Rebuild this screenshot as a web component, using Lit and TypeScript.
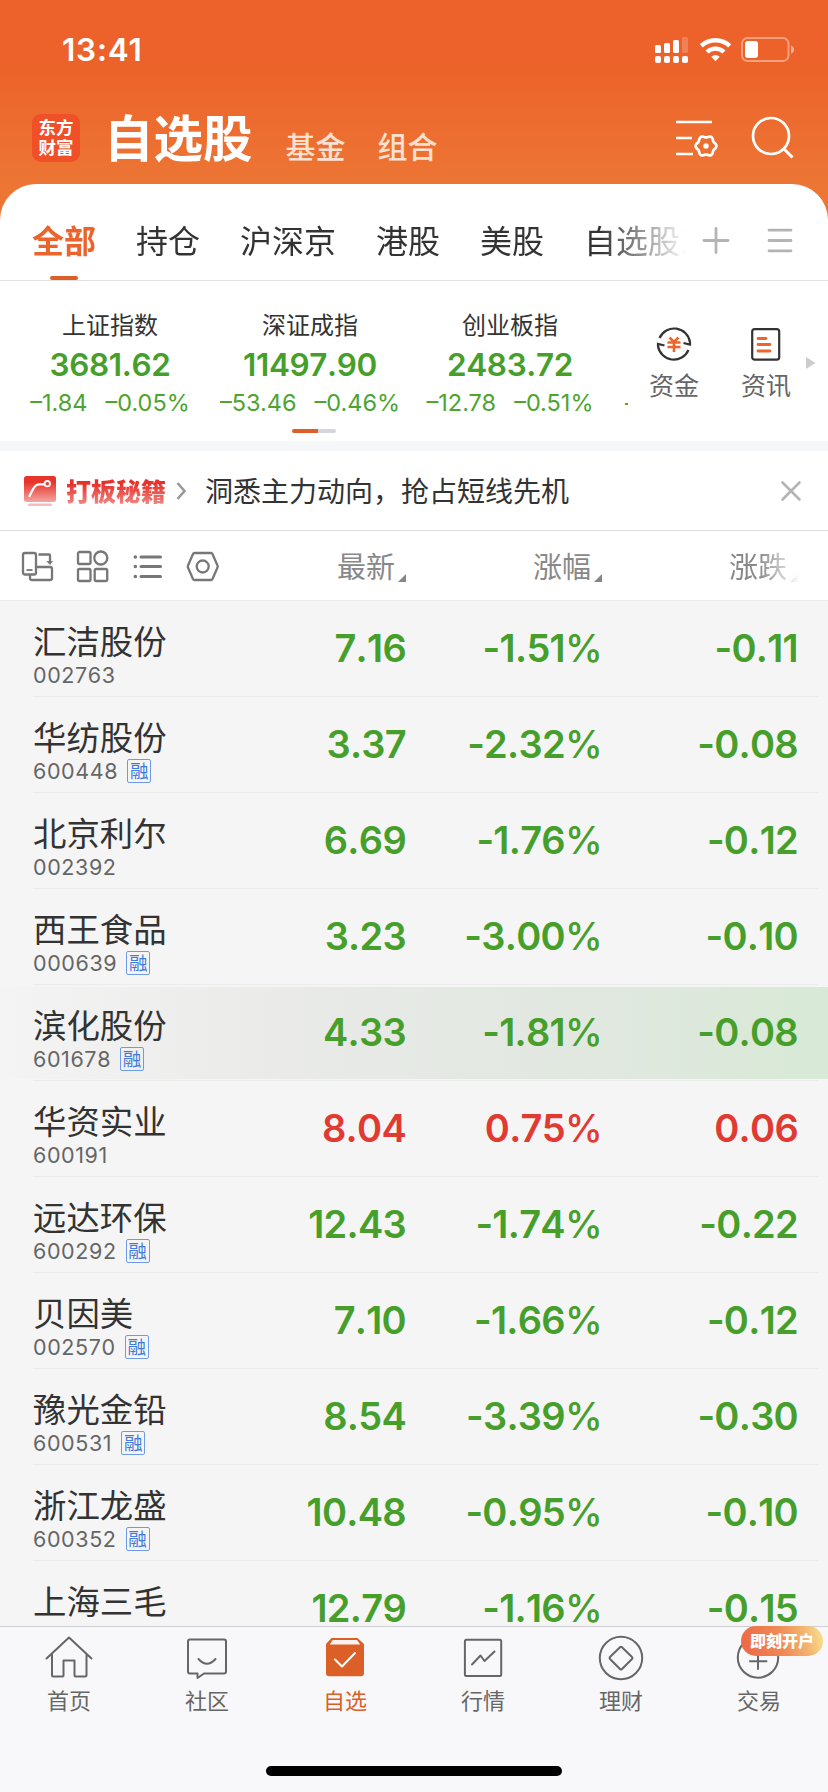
import { LitElement, html, css, svg } from "lit";
import { customElement, property } from "lit/decorators.js";
import { classMap } from "lit/directives/class-map.js";

interface Stock {
  name: string;
  code: string;
  margin: boolean;
  last: string;
  pct: string;
  diff: string;
  flash?: boolean;
}

const stocks: Stock[] = [
  { name: "汇洁股份", code: "002763", margin: false, last: "7.16", pct: "-1.51%", diff: "-0.11" },
  { name: "华纺股份", code: "600448", margin: true, last: "3.37", pct: "-2.32%", diff: "-0.08" },
  { name: "北京利尔", code: "002392", margin: false, last: "6.69", pct: "-1.76%", diff: "-0.12" },
  { name: "西王食品", code: "000639", margin: true, last: "3.23", pct: "-3.00%", diff: "-0.10" },
  { name: "滨化股份", code: "601678", margin: true, last: "4.33", pct: "-1.81%", diff: "-0.08", flash: true },
  { name: "华资实业", code: "600191", margin: false, last: "8.04", pct: "0.75%", diff: "0.06" },
  { name: "远达环保", code: "600292", margin: true, last: "12.43", pct: "-1.74%", diff: "-0.22" },
  { name: "贝因美", code: "002570", margin: true, last: "7.10", pct: "-1.66%", diff: "-0.12" },
  { name: "豫光金铅", code: "600531", margin: true, last: "8.54", pct: "-3.39%", diff: "-0.30" },
  { name: "浙江龙盛", code: "600352", margin: true, last: "10.48", pct: "-0.95%", diff: "-0.10" },
  { name: "上海三毛", code: "", margin: false, last: "12.79", pct: "-1.16%", diff: "-0.15" },
];

const indices = [
  { name: "上证指数", value: "3681.62", diff: "–1.84", pct: "–0.05%" },
  { name: "深证成指", value: "11497.90", diff: "–53.46", pct: "–0.46%" },
  { name: "创业板指", value: "2483.72", diff: "–12.78", pct: "–0.51%" },
];

const tabs = ["全部", "持仓", "沪深京", "港股", "美股", "自选股1"];

@customElement("stock-row")
class StockRow extends LitElement {
  @property({ attribute: false }) stock!: Stock;

  static styles = css`
    :host { display: block; height: 96px; flex: none; }
    .body {
      display: grid; grid-template-columns: 177px 196px 196px 196px;
      height: 92px; margin-top: 2px; padding-left: 33px; align-items: center;
    }
    .body.flash {
      background: linear-gradient(90deg, #f4f4f4 0, #ebebea 30%, #e6e9e5 48%, #e0e8df 75%, #d9e9d7 96%);
    }
    .id { align-self: start; padding-top: 15px; }
    .name {
      font: 400 33.4px/44px "Noto Sans CJK SC", sans-serif; color: #333; white-space: nowrap;
    }
    .meta { display: flex; align-items: center; height: 24px; margin-top: 1px; gap: 9px; }
    .code { font: 400 21.5px/24px Inter, sans-serif; color: #666; letter-spacing: 0.6px; font-kerning: none; }
    .badge {
      box-sizing: border-box; width: 24px; height: 24px; border: 1px solid #6d9be6; border-radius: 2px;
      font: 400 18.5px/20px "Noto Sans CJK SC", sans-serif; color: #3e7bdb; text-align: center;
    }
    .num {
      font: 600 38px/46px Inter, sans-serif; text-align: right; color: #479f2b; letter-spacing: -0.7px;
      font-kerning: none; position: relative; top: -1px;
    }
    .up .num { color: #e03a33; }
    .pc { font-weight: 500; }
    .line { height: 1px; margin: 1px 10px 0 33px; background: #ebebeb; }
  `;

  render() {
    const s = this.stock;
    const up = !s.pct.startsWith("-");
    return html`
      <div class=${classMap({ body: true, up, flash: !!s.flash })}>
        <div class="id">
          <div class="name">${s.name}</div>
          <div class="meta">
            <span class="code">${s.code}</span>
            ${s.margin ? html`<span class="badge">融</span>` : ""}
          </div>
        </div>
        <div class="num">${s.last}</div>
        <div class="num">${s.pct.slice(0, -1)}<span class="pc">%</span></div>
        <div class="num">${s.diff}</div>
      </div>
      <div class="line"></div>
    `;
  }
}

const gearPath = (() => {
  let d = "";
  for (let i = 0; i <= 72; i++) {
    const a = (i / 72) * Math.PI * 2;
    const r = 9.5 + 0.9 * Math.cos(6 * a);
    d += `${i ? "L" : "M"}${(30 + r * Math.cos(a)).toFixed(2)} ${(29 + r * Math.sin(a)).toFixed(2)}`;
  }
  return d + "Z";
})();

const navIcons: Record<string, unknown> = {
  home: svg`<path d="M2.5 23.5 25 2.5 47.5 23.5M8 19.5V40.5Q8 41.5 9 41.5H18.5Q19.5 41.5 19.5 40.5V25.5H30.5V40.5Q30.5 41.5 31.5 41.5H41Q42.5 41.5 42.5 40.5V19.5" />`,
  chat: svg`<path d="M8 4.5H42Q44 4.5 44 6.5V36.5Q44 38.5 42 38.5H22L15.5 43V38.5H8Q6 38.5 6 36.5V6.5Q6 4.5 8 4.5ZM16.5 24Q25 33.5 33.5 24" />`,
  star: svg`<path class="fill" d="M11.5 3H37.5L44 9V38Q44 41.2 40.8 41.2H9.2Q6 41.2 6 38V9Z" /><path class="pale" d="M12.7 4.9H37L40.2 9.6H9.8Z" /><path class="check" d="M15 24.5 22 31.5 35 18" />`,
  chart: svg`<rect x="6.9" y="4.7" width="36.3" height="36.3" rx="1.5" /><path d="M14 29.5 22.5 20.5 26.5 26 36.5 16.5" />`,
  wealth: svg`<circle cx="25" cy="23" r="21.2" /><path d="M24 12.2Q25 11.2 26 12.2L36 22Q37 23 36 24L26 34Q25 35 24 34L14 24Q13 23 14 22Z" />`,
  trade: svg`<circle cx="24" cy="22.5" r="20.2" /><path d="M16 26.3H32.5M24 18V34" />`,
};

const nav = [
  { id: "home", label: "首页" },
  { id: "chat", label: "社区" },
  { id: "star", label: "自选" },
  { id: "chart", label: "行情" },
  { id: "wealth", label: "理财" },
  { id: "trade", label: "交易", tip: "即刻开户" },
];

@customElement("app-root")
class AppRoot extends LitElement {
  static styles = css`
    :host {
      display: flex; flex-direction: column; width: 828px; height: 1792px; overflow: hidden;
      background: #f5f5f5; font-family: "Noto Sans CJK SC", sans-serif; color: #333;
    }
    * { box-sizing: border-box; }
    svg { display: block; flex: none; fill: none; overflow: visible; }
    .head {
      flex: none; height: 230px; margin-bottom: -46px; color: #fff;
      background: linear-gradient(180deg, #ec622a 0, #ec632a 72px, #ec6a2e 110px, #ec7534 180px, #ec7735 230px);
    }
    .status { display: flex; align-items: center; height: 99px; padding-left: 62px; }
    .time { flex: 1; font: 600 31.5px/40px Inter, sans-serif; letter-spacing: 0.8px; }
    .signals { margin-right: 33px; }
    .brand { display: flex; align-items: center; height: 78px; padding: 0 32px; }
    .logo {
      width: 48px; height: 48px; border-radius: 9px; background: #ef5028; margin-right: 24px;
      font: 700 17.5px/20px "Noto Sans CJK SC", sans-serif; text-align: center; padding-top: 3px;
    }
    .title { font-size: 49.5px; line-height: 60px; font-weight: 700; margin-right: 33px; padding-bottom: 5px; }
    .sub { font-size: 30px; line-height: 44px; font-weight: 500; color: #fde0d0; margin-right: 32px; padding-top: 14px; }
    .grow { flex: 1; }
    .tabs {
      display: flex; flex: none; height: 97px; background: #fff; border-radius: 36px 36px 0 0;
      border-bottom: 1px solid #e0e0e0;
    }
    .scroll {
      display: flex; gap: 40px; width: 685px; padding-left: 32px; overflow: hidden;
      -webkit-mask-image: linear-gradient(90deg, #000 600px, transparent 688px);
      mask-image: linear-gradient(90deg, #000 600px, transparent 688px);
    }
    .tab {
      display: flex; flex-direction: column; align-items: center; justify-content: space-between;
      font-size: 32px; line-height: 44px; white-space: nowrap; padding-top: 33px;
    }
    .tab.on { color: #ec642b; font-weight: 700; }
    .mark { width: 28px; height: 4px; border-radius: 2px; background: #dc5f27; }
    .tools { padding: 43px 0 0 17px; }
    .index { display: flex; flex: none; height: 160px; background: #fff; }
    .strip { display: flex; width: 628px; padding-left: 10px; overflow: hidden; }
    .cell { width: 200px; flex: none; text-align: center; padding-top: 27px; white-space: nowrap; }
    .iname { font-size: 24px; line-height: 32px; }
    .ivalue { font: 600 31.5px/38px Inter, sans-serif; color: #479f2b; margin-top: 6px; letter-spacing: -0.35px; font-kerning: none; }
    .ichange {
      display: flex; justify-content: center; gap: 18px; margin: 3px -10px 0;
      font: 400 23.5px/32px Inter, sans-serif; color: #4da431;
    }
    .pager { width: 44px; height: 4px; margin: 10px 0 0 82px; border-radius: 2px; background: linear-gradient(90deg, #dc5f27 26px, #d5d6dc 26px); }
    .peek { font: 400 23.5px/32px Inter, sans-serif; color: #4da431; padding: 106px 0 0 15px; }
    .quick { width: 92px; padding-top: 43px; display: flex; flex-direction: column; align-items: center; }
    .qlabel { font-size: 25px; line-height: 34px; color: #666; margin-top: 3px; }
    .next { margin: 76px 0 0 -6px; }
    .band { flex: none; height: 10px; background: #f6f7f9; }
    .promo { display: flex; flex: none; align-items: center; height: 80px; background: #fff; border-bottom: 1px solid #e0e0e0; padding-left: 24px; }
    .ptitle {
      font-size: 25px; line-height: 36px; font-weight: 900; margin: -2px 0 0 10px;
      background: linear-gradient(180deg, #e8312a 12px, #f08a86 33px); -webkit-background-clip: text; background-clip: text; color: transparent;
    }
    .chev { margin-left: 10px; }
    .ptext { flex: 1; font-size: 28px; line-height: 40px; margin: -2px 0 0 19px; }
    .close { margin-right: 27px; }
    .cols {
      display: grid; grid-template-columns: 210px 196px 196px 196px; flex: none; height: 70px; background: #fff;
      border-bottom: 1px solid #ececec;
    }
    .views { padding: 17.5px 0 0 20px; }
    .col { display: flex; justify-content: flex-end; font-size: 29px; line-height: 40px; color: #888; padding-top: 14px; }
    .tri { margin: 29px 0 0 3px; width: 8px; height: 8px; background: #858585; clip-path: polygon(100% 0, 100% 100%, 0 100%); }
    .fade {
      -webkit-mask-image: linear-gradient(90deg, #000 80%, transparent 101%);
      mask-image: linear-gradient(90deg, #000 80%, transparent 101%);
    }
    .list { flex: 1; min-height: 0; overflow: hidden; display: flex; flex-direction: column; }
    .nav { display: flex; flex: none; height: 166px; background: #f8f8fb; border-top: 1px solid #cfcfd4; position: relative; }
    .item { width: 138px; display: flex; flex-direction: column; align-items: center; padding-top: 8px; color: #666; position: relative; }
    .item svg { stroke: #666; stroke-width: 2; stroke-linejoin: round; stroke-linecap: round; }
    .item .fill { fill: #dc5f27; stroke: none; }
    .item .pale { fill: #fdf3ee; stroke: none; }
    .item .check { stroke: #fff; stroke-width: 2; }
    .item.on { color: #dc5f27; }
    .nlabel { font-size: 22px; line-height: 30px; margin-top: 3px; }
    .tip {
      position: absolute; left: 51px; top: -1px; width: 82px; height: 30px; border-radius: 15px;
      background: linear-gradient(75deg, #ec6d48 10%, #ef8b55 50%, #f4b671 78%, #f7e593 100%); color: #fff;
      font-size: 16px; line-height: 28px; font-weight: 900; text-align: center; white-space: nowrap;
    }
    .bar { position: absolute; left: 266px; bottom: 16px; width: 296px; height: 10px; border-radius: 5px; background: #000; }
  `;

  render() {
    return html`
      <div class="head">
        <div class="status">
          <div class="time">13:41</div>
          <svg class="signals" width="140" height="26" viewBox="0 0 140 26">
            <g fill="#fff">
              <rect x="0" y="8" width="6" height="8" rx="1.5" /><rect x="9" y="6" width="6" height="10" rx="1.5" />
              <rect x="18" y="3" width="6" height="13" rx="1.5" /><rect x="27" y="0" width="6" height="16" rx="1.5" opacity="0.2" />
              <rect x="0" y="19" width="6" height="7" rx="2" /><rect x="9" y="19" width="6" height="7" rx="2" />
              <rect x="18" y="19" width="6" height="7" rx="2" /><rect x="27" y="19" width="6" height="7" rx="2" />
              <path d="M60.5 24.2 56.3 19.7Q60.5 16.2 64.7 19.7Z" />
            </g>
            <g stroke="#fff" stroke-width="4.4">
              <path d="M46.3 8.9A20.5 20.5 0 0 1 74.7 8.9" /><path d="M52 15A12.5 12.5 0 0 1 69 15" />
            </g>
            <rect x="87" y="1" width="46.5" height="23" rx="5.5" stroke="#fff" stroke-opacity="0.4" stroke-width="2" />
            <rect x="90" y="4" width="13" height="17" rx="3" fill="#fff" />
            <path d="M136 8.5Q139 9.500 139 12.5T136 16.5Z" fill="#fff" fill-opacity="0.5" />
          </svg>
        </div>
        <div class="brand">
          <div class="logo">东方<br />财富</div>
          <div class="title">自选股</div>
          <div class="sub">基金</div>
          <div class="sub">组合</div>
          <div class="grow"></div>
          <svg width="120" height="42" viewBox="0 0 120 42" stroke="#fff" stroke-width="2.7">
            <path d="M0 5H36M0 21H16M0 37H17" />
            <path d=${gearPath} />
            <circle cx="30" cy="29" r="2.7" fill="#fff" stroke="none" />
            <circle cx="95" cy="19" r="18" /><path d="M107.5 31.5 116.5 40.5" stroke-width="3" />
          </svg>
        </div>
      </div>

      <div class="tabs">
        <div class="scroll">
          ${tabs.map(
            (t, i) => html`<div class=${classMap({ tab: true, on: i === 0 })}>
              <span>${t}</span>${i === 0 ? html`<span class="mark"></span>` : ""}
            </div>`
          )}
        </div>
        <svg class="tools" width="112" height="70" viewBox="0 0 95 27" preserveAspectRatio="xMinYMin" stroke="#b4b4b4" stroke-width="2.8" stroke-linecap="round">
          <path d="M2 13.5H26M14 1.5V25.5M67 3.2H89M67 13.5H89M67 23.8H89" />
        </svg>
      </div>

      <div class="index">
        <div class="strip">
          ${indices.map(
            (x, i) => html`<div class="cell">
              <div class="iname">${x.name}</div>
              <div class="ivalue">${x.value}</div>
              <div class="ichange"><span>${x.diff}</span><span>${x.pct}</span></div>
              ${i === 1 ? html`<div class="pager"></div>` : ""}
            </div>`
          )}
          <div class="peek">–</div>
        </div>
        <div class="quick">
          <svg width="40" height="40" viewBox="0 0 40 40" stroke="#333" stroke-width="2.2">
            <path d="M5.5 14A16 16 0 0 1 36 18.5V20.5L29.5 19M34.5 26A16 16 0 0 1 4 22V20L10.5 21.5" />
            <path d="M15.5 13.5 20 18 24.5 13.5M20 18V28M13.500 18.5H26.5M13.5 23H26.5" stroke="#ee652b" stroke-width="2.6" />
          </svg>
          <div class="qlabel">资金</div>
        </div>
        <div class="quick">
          <svg width="40" height="40" viewBox="0 0 40 40" stroke="#333" stroke-width="2.2">
            <rect x="6.2" y="5.2" width="27" height="30.5" rx="2.5" />
            <path d="M12 14.5H20M12 20.5H24M12 27H24" stroke="#ee652b" stroke-width="2.8" stroke-linecap="round" />
          </svg>
          <div class="qlabel">资讯</div>
        </div>
        <svg class="next" width="10" height="12" viewBox="0 0 10 12"><path d="M0 0 9.5 6 0 12Z" fill="#ccc" /></svg>
      </div>
      <div class="band"></div>

      <div class="promo">
        <svg width="32" height="32" viewBox="0 0 32 32">
          <defs><linearGradient id="g" x1="0" y1="0" x2="0" y2="1"><stop offset="0.25" stop-color="#e8352c" /><stop offset="1" stop-color="#f3a5a2" /></linearGradient></defs>
          <rect x="0" y="1" width="32" height="26" rx="2.5" fill="url(#g)" />
          <rect x="4" y="28.5" width="24" height="2.5" rx="1.2" fill="#f5bcbb" />
          <path d="M5.5 21C9 14 11 9.3 15 9.3H20" stroke="#fff" stroke-width="2.3" stroke-linecap="round" />
          <circle cx="23.3" cy="8.7" r="2.7" stroke="#fff" stroke-width="1.8" />
        </svg>
        <div class="ptitle">打板秘籍</div>
        <svg class="chev" width="10" height="18" viewBox="0 0 10 18"><path d="M1.5 1 8.5 9 1.5 17" stroke="#999" stroke-width="2.6" /></svg>
        <div class="ptext">洞悉主力动向，抢占短线先机</div>
        <svg class="close" width="20" height="20" viewBox="0 0 20 20"><path d="M1.5 1.5 18.5 18.5M18.5 1.5 1.5 18.5" stroke="#b4b4b4" stroke-width="2.6" stroke-linecap="round" /></svg>
      </div>

      <div class="cols">
        <div class="views">
          <svg width="200" height="34" viewBox="0 0 200 34" stroke="#777" stroke-width="2.3">
            <rect x="3" y="4" width="13" height="21.5" rx="2" /><path d="M6.5 21H12.5" stroke-width="1.8" />
            <path d="M10 26V29Q10 31 12 31H30Q32 31 32 29V20Q32 18 30 18H16.5M18.5 5.5H29Q30 5.5 30 6.5V13" />
            <path d="M26.3 12H33L30 16Z" fill="#777" stroke="none" />
            <rect x="58" y="3" width="12.5" height="12" rx="1.5" /><circle cx="80.8" cy="9" r="6.5" />
            <rect x="58" y="20" width="12.5" height="12" rx="1.5" /><rect x="74.7" y="20" width="12.5" height="12" rx="1.5" />
            <path d="M121 8H140.5M121 17.5H140.5M121 27.5H140.5" stroke-width="3" stroke-linecap="round" />
            <path d="M115.3 8H115.4M115.3 17.5H115.4M115.3 27.5H115.4" stroke-width="3.5" stroke-linecap="round" />
            <path d="M174.5 4H191Q192 4 192.5 5L197.5 16.5Q198 17.5 197.5 18.5L192.5 30Q192 31 191 31H174.5Q173.500 31 173 30L168 18.5Q167.5 17.5 168 16.5L173 5Q173.5 4 174.5 4Z" />
            <circle cx="182.7" cy="17.5" r="6" />
          </svg>
        </div>
        <div class="col">最新<i class="tri"></i></div>
        <div class="col">涨幅<i class="tri"></i></div>
        <div class="col fade">涨跌<i class="tri"></i></div>
      </div>

      <div class="list">${stocks.map((s) => html`<stock-row .stock=${s}></stock-row>`)}</div>

      <div class="nav">
        ${nav.map(
          (n) => html`<div class=${classMap({ item: true, on: n.id === "star" })}>
            <svg width="50" height="46" viewBox="0 0 50 46">${navIcons[n.id]}</svg>
            <div class="nlabel">${n.label}</div>
            ${n.tip ? html`<div class="tip">${n.tip}</div>` : ""}
          </div>`
        )}
        <div class="bar"></div>
      </div>
    `;
  }
}
